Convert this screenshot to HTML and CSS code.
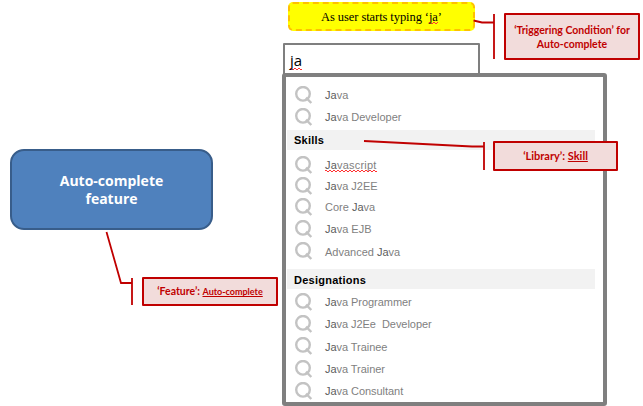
FILE: index.html
```html
<!DOCTYPE html>
<html lang="en">
<head>
<meta charset="utf-8">
<title>Auto-complete feature</title>
<link rel="stylesheet" href="styles.css">
</head>
<body>
<svg class="defs" width="0" height="0" aria-hidden="true">
  <symbol id="search" viewBox="0 0 18 18"><circle cx="8" cy="7.800" r="6.800" fill="none" stroke="#c3c3c3" stroke-width="2.400"/><path d="M11 11.600 L16.300 17" stroke="#c3c3c3" stroke-width="2.400"/></symbol>
</svg>
<main class="canvas">
  <div class="node trigger"><span>As user starts typing ‘<span class="typo">ja</span>’</span></div>
  <div class="node field"><span class="typo">ja</span></div>
  <section class="node panel">
    <ul class="group first">
      <li><svg><use href="#search"/></svg><span><b>Ja</b>va</span></li>
      <li><svg><use href="#search"/></svg><span><b>Ja</b>va Developer</span></li>
    </ul>
    <h2>Skills</h2>
    <ul class="group skills">
      <li class="wide"><svg><use href="#search"/></svg><span class="typo"><b>Ja</b>vascript</span></li>
      <li class="short"><svg><use href="#search"/></svg><span><b>Ja</b>va J2EE</span></li>
      <li><svg><use href="#search"/></svg><span>Core <b>Ja</b>va</span></li>
      <li><svg><use href="#search"/></svg><span><b>Ja</b>va EJB</span></li>
      <li class="tall"><svg><use href="#search"/></svg><span>Advanced <b>Ja</b>va</span></li>
    </ul>
    <h2 class="designations">Designations</h2>
    <ul class="group last">
      <li><svg><use href="#search"/></svg><span><b>Ja</b>va Programmer</span></li>
      <li><svg><use href="#search"/></svg><span><b>Ja</b>va J2Ee&nbsp; Developer</span></li>
      <li class="tall"><svg><use href="#search"/></svg><span><b>Ja</b>va Trainee</span></li>
      <li><svg><use href="#search"/></svg><span><b>Ja</b>va Trainer</span></li>
      <li><svg><use href="#search"/></svg><span><b>Ja</b>va Consultant</span></li>
    </ul>
  </section>
  <div class="node feature">Auto-complete<br>feature</div>
  <svg class="connectors" width="643" height="406" fill="none" stroke="#c00000" stroke-width="1.800">
    <path d="M473.500 20.500 L482 22.500 H494 M494 14 V59"/>
    <path d="M364 141 L472 146.500 H484 M484 142 V170"/>
    <path d="M106.500 232 L121 283 H132 M132 278 V305"/>
  </svg>
  <div class="node note condition">‘Triggering Condition’ for<br>Auto-complete</div>
  <div class="node note library"><span>‘Library’: <u>Skill</u></span></div>
  <div class="node note tag"><span>‘Feature’: <u>Auto-complete</u></span></div>
</main>
</body>
</html>
```
FILE: styles.css
```css
* { box-sizing: border-box; }
body { margin: 0; background: #fff; }
.defs { position: absolute; }
.canvas { position: relative; width: 643px; height: 406px; overflow: hidden; font-family: "Liberation Sans", Arial, sans-serif; }
.node { position: absolute; }
.connectors { position: absolute; left: 0; top: 0; }
.typo {
  background:
    repeating-linear-gradient(90deg, #f33 0 2px, transparent 2px 4px) 0 calc(100% - 1px) / 100% 1px no-repeat,
    repeating-linear-gradient(90deg, transparent 0 2px, #f33 2px 4px) 0 100% / 100% 1px no-repeat;
}
.trigger {
  left: 288px; top: 2px; width: 187px; height: 29px;
  display: flex; align-items: center; justify-content: center;
  background: #ff0; border: 2px dashed #ffc000; border-radius: 5px;
  font: 12.5px "Liberation Serif", serif; color: #000; padding-top: 2px; letter-spacing: -.08px;
}
.field {
  left: 283px; top: 43px; width: 197px; height: 34px;
  border: 2px solid #7f7f7f; border-radius: 1px; padding: 6px 5px;
  font: 15px/18px "Open Sans", sans-serif; color: #000;
}
.field .typo { display: inline-block; height: 19px; }
.panel {
  left: 282px; top: 73px; width: 325px; height: 333px;
  border: 4px solid #7f7f7f; border-radius: 3px; background: #fff; padding: 7px 8px 0 1px;
}
.group { list-style: none; margin: 0; padding: 0 0 0 8px; }
.group li { display: flex; align-items: center; gap: 12px; height: 22px; font-size: 11px; color: #7f7f7f; }
.group svg { width: 18px; height: 18px; flex: none; margin-bottom: 1px; }
.group b { font-weight: 400; color: #5c5c5c; }
.group .short { height: 20px; }
.group .tall { height: 23px; }
.group .wide { letter-spacing: .2px; }
.group .typo { padding-bottom: 1px; }
.first { height: 46px; }
.skills { height: 119px; padding-top: 4px; }
.last { padding-top: 2px; }
.last li { letter-spacing: -.05px; }
h2 { margin: 0; height: 20px; padding-left: 7px; background: #f2f2f2; color: #000; font-size: 11px; line-height: 20px; letter-spacing: .25px; }
.designations { line-height: 22px; }
.feature {
  left: 10px; top: 149px; width: 203px; height: 81px; padding-top: 21px;
  background: #4f81bd; border: 2px solid #385d8a; border-radius: 14px;
  color: #fff; font: 700 14px/18px "Open Sans", sans-serif; text-align: center;
}
.note {
  display: flex; align-items: center; justify-content: center; text-align: center;
  background: #f2dcdb; border: 2px solid #c00000; border-radius: 1px; color: #c00000;
  font: 700 10.5px/14px Lato, sans-serif;
}
.note u { text-underline-offset: 1px; text-decoration-skip-ink: none; }
.condition { left: 504px; top: 13px; width: 136px; height: 47px; }
.library { left: 493px; top: 141px; width: 125px; height: 30px; font-size: 11px; }
.tag { left: 142px; top: 277px; width: 136px; height: 29px; }
.tag u { font-size: 9px; }
```
